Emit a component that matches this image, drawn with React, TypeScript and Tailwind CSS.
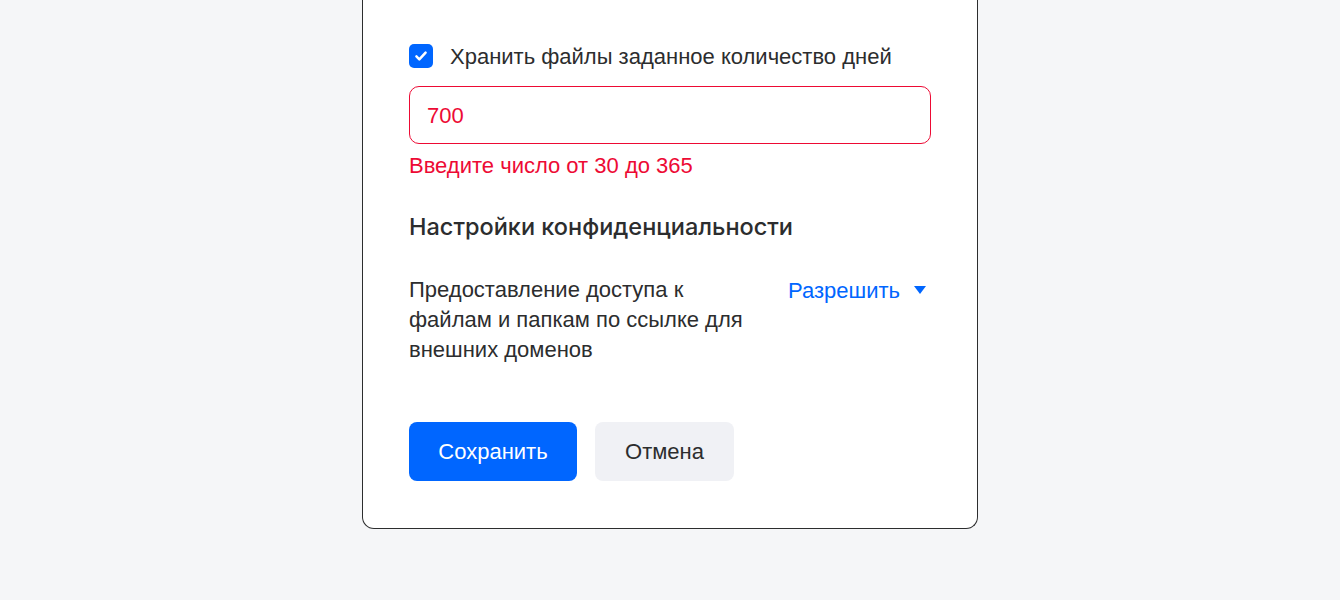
import React, { useState } from 'react';

const body = { fontFamily: '"Liberation Sans", Arial, sans-serif' };
const heading = { fontFamily: 'Inter, "Noto Sans", sans-serif' };

function CheckIcon() {
  return (
    <svg viewBox="0 0 24 24" className="h-5 w-5" fill="none">
      <path d="M6.5 12.5l3.5 3.5 7.5-8" stroke="white" strokeWidth="3" strokeLinecap="round" strokeLinejoin="round" />
    </svg>
  );
}

export default function App() {
  const [keep, setKeep] = useState(true);
  const [days, setDays] = useState('700');

  return (
    <div className="min-h-[600px] w-full bg-[#f5f6f8] flex justify-center" style={body}>
      <div className="w-[616px] h-[529px] bg-white border-x border-b border-[#2c2d2e] rounded-b-[12px] px-[46px] pt-[44px] text-[#2c2d2e]">
        <label className="flex items-center gap-[17px] h-6 cursor-pointer">
          <button
            type="button"
            onClick={() => setKeep(!keep)}
            className="flex h-6 w-6 items-center justify-center rounded-[5px] bg-[#0066ff]"
          >
            {keep && <CheckIcon />}
          </button>
          <span className="pt-[2px] text-[22px] leading-6">Хранить файлы заданное количество дней</span>
        </label>

        <input
          value={days}
          onChange={(e) => setDays(e.target.value)}
          className="mt-[18px] block h-[58px] w-full rounded-[10px] border-[1.5px] border-[#ed0a34] px-[17px] pt-[2px] text-[22px] text-[#ed0a34] outline-none"
        />
        <div className="mt-[10px] text-[22px] leading-6 text-[#ed0a34]">Введите число от 30 до 365</div>

        <h2 className="mt-[35px] text-[23.5px] leading-7 font-medium text-[#2c2d2e]" style={heading}>
          Настройки конфиденциальности
        </h2>

        <div className="mt-[34px] flex justify-between">
          <p className="w-[345px] text-[22px] leading-[30px]">
            Предоставление доступа к файлам и папкам по ссылке для внешних доменов
          </p>
          <button type="button" className="flex h-[30px] items-center gap-[14px] pr-[5px] text-[22px] text-[#0066ff]">
            Разрешить
            <svg viewBox="0 0 12 8" className="h-2 w-3">
              <path d="M0 0h12L6 8z" fill="#0066ff" />
            </svg>
          </button>
        </div>

        <div className="mt-[57px] flex gap-[18px]">
          <button type="button" className="h-[59px] w-[168px] rounded-[8px] bg-[#0066ff] text-[22px] text-white">
            Сохранить
          </button>
          <button type="button" className="h-[59px] w-[139px] rounded-[8px] bg-[#f0f1f5] text-[22px] text-[#2c2d2e]">
            Отмена
          </button>
        </div>
      </div>
    </div>
  );
}
